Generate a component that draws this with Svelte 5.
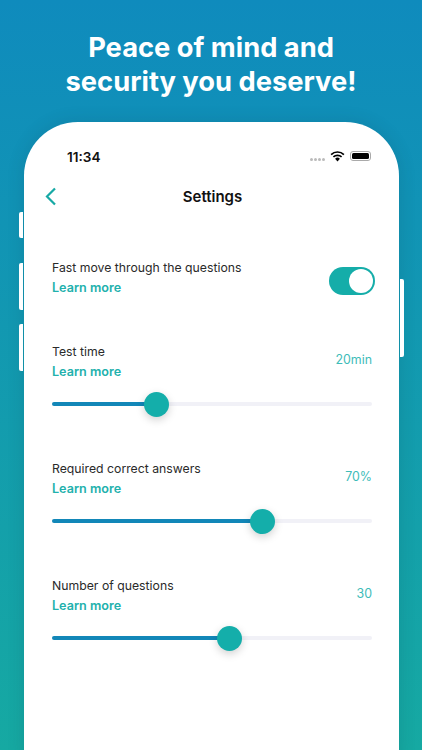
<script>
  const sliders = [
    { label: "Test time", value: "20min", pos: 32.5 },
    { label: "Required correct answers", value: "70%", pos: 65.7 },
    { label: "Number of questions", value: "30", pos: 55.5 },
  ];
</script>

<main class="page">
  <h1>Peace of mind and<br />security you deserve!</h1>

  <div class="phone">
    <span class="btn b1"></span>
    <span class="btn b2"></span>
    <span class="btn b3"></span>
    <span class="btn b4"></span>

    <div class="status">
      <span class="time">11:34</span>
      <div class="status-icons">
        <span class="dots"><i></i><i></i><i></i><i></i></span>
        <svg width="15" height="11" viewBox="0 0 14 11">
          <path d="M0.6 3.6a9.2 9.2 0 0 1 12.8 0" fill="none" stroke="#000" stroke-width="1.7" />
          <path d="M2.9 5.9a6 6 0 0 1 8.2 0" fill="none" stroke="#000" stroke-width="1.7" />
          <path d="M4.6 7.7a3.4 3.4 0 0 1 4.8 0L7 10.4z" fill="#000" />
        </svg>
        <span class="battery"><b></b></span>
      </div>
    </div>

    <header class="nav">
      <svg class="back" width="12" height="19" viewBox="0 0 12 19">
        <path d="M10 1.5 2 9.5l8 8" fill="none" stroke="#17a9a5" stroke-width="2.2" />
      </svg>
      <span class="title">Settings</span>
    </header>

    <section class="toggle-row">
      <div>
        <div class="label">Fast move through the questions</div>
        <div class="more">Learn more</div>
      </div>
      <div class="toggle"><span></span></div>
    </section>

    {#each sliders as s}
      <section class="slider-row">
        <div class="head">
          <div>
            <div class="label">{s.label}</div>
            <div class="more">Learn more</div>
          </div>
          <span class="value">{s.value}</span>
        </div>
        <div class="track">
          <div class="fill" style="width: {s.pos}%"></div>
          <div class="thumb" style="left: {s.pos}%"></div>
        </div>
      </section>
    {/each}
  </div>
</main>

<style>
  :global(body) {
    margin: 0;
  }

  .page {
    width: 422px;
    height: 750px;
    overflow: hidden;
    box-sizing: border-box;
    background: linear-gradient(180deg, #0f8bbd 0%, #16a9a2 100%);
    font-family: Inter, "Liberation Sans", sans-serif;
  }

  h1 {
    margin: 0;
    padding-top: 31px;
    height: 91px;
    box-sizing: content-box;
    color: #fff;
    font-size: 27.3px;
    line-height: 34px;
    font-weight: 700;
    text-align: center;
  }

  .phone {
    position: relative;
    box-sizing: border-box;
    width: 375px;
    height: 640px;
    margin-left: 24px;
    padding: 0 27px 0 28px;
    background: #fff;
    border-radius: 54px 54px 0 0;
    box-shadow: 0 0 18px rgba(0, 40, 60, 0.14);
  }

  .btn {
    position: absolute;
    width: 4px;
    background: #fff;
    border-radius: 2px 0 0 2px;
    left: -5px;
  }
  .b1 { top: 90px; height: 26px; }
  .b2 { top: 141px; height: 47px; }
  .b3 { top: 202px; height: 47px; }
  .b4 {
    top: 157px;
    height: 78px;
    left: 376px;
    border-radius: 0 2px 2px 0;
  }

  .status {
    display: flex;
    justify-content: space-between;
    align-items: center;
    height: 18px;
    padding: 26px 0 0 15px;
    margin-right: 1px;
  }

  .time {
    font-size: 13.6px;
    font-weight: 600;
    color: #111;
  }

  .status-icons {
    display: flex;
    align-items: center;
    gap: 5px;
    margin-top: -2px;
  }

  .dots {
    display: flex;
    gap: 1px;
    margin-top: 7px;
  }
  .dots i {
    width: 3px;
    height: 3px;
    border-radius: 50%;
    background: #bbb;
  }

  .battery {
    position: relative;
    box-sizing: border-box;
    width: 21px;
    height: 10px;
    padding: 1px;
    border: 1px solid #aaa;
    border-radius: 3px;
  }
  .battery b {
    display: block;
    height: 100%;
    background: #000;
    border-radius: 1.5px;
  }

  .nav {
    position: relative;
    display: flex;
    justify-content: center;
    align-items: center;
    height: 24px;
    margin-top: 18px;
    margin-left: -7px;
  }

  .back {
    position: absolute;
    left: 0;
    top: 3px;
  }

  .title {
    font-size: 15px;
    font-weight: 600;
    color: #111;
    margin-left: 8px;
  }

  .label {
    font-size: 12.25px;
    line-height: 20px;
    color: #2a2a2a;
  }

  .more {
    font-size: 12.6px;
    line-height: 20px;
    font-weight: 600;
    color: #22b1ad;
  }

  .toggle-row {
    display: flex;
    justify-content: space-between;
    align-items: center;
    margin-top: 50px;
    margin-right: -3px;
  }

  .toggle {
    box-sizing: border-box;
    width: 46px;
    height: 28px;
    padding: 2px;
    display: flex;
    justify-content: flex-end;
    background: #15ada9;
    border-radius: 14px;
    margin-top: 6px;
  }
  .toggle span {
    width: 24px;
    height: 24px;
    background: #fff;
    border-radius: 50%;
  }

  .slider-row {
    margin-top: 53px;
  }
  .toggle-row + .slider-row {
    margin-top: 44px;
  }

  .head {
    display: flex;
    justify-content: space-between;
    align-items: flex-start;
  }

  .value {
    font-size: 12.4px;
    line-height: 20px;
    color: #3dbcb9;
    margin-top: 8px;
  }

  .track {
    position: relative;
    height: 4px;
    margin-top: 20px;
    background: #f1f1f7;
    border-radius: 2px;
  }

  .fill {
    height: 100%;
    background: #1287b8;
    border-radius: 2px;
  }

  .thumb {
    position: absolute;
    top: 50%;
    width: 25px;
    height: 25px;
    margin: -12.5px 0 0 -12.5px;
    background: #14aeaa;
    border-radius: 50%;
    box-shadow: 0 3px 8px rgba(0, 0, 0, 0.18);
  }
</style>
